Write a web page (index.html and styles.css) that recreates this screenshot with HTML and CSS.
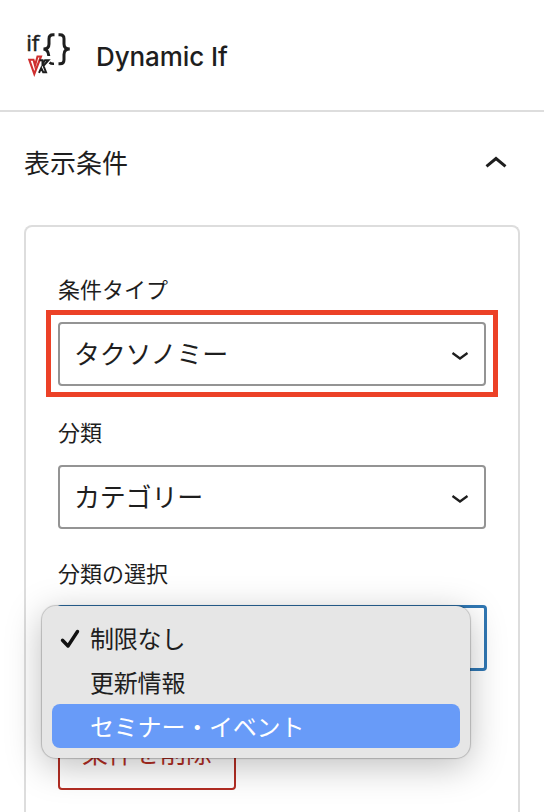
FILE: index.html
```html
<!DOCTYPE html>
<html lang="ja">
<head>
    <meta charset="UTF-8">
    <meta name="viewport" content="width=device-width, initial-scale=1.0">
    <title>Dynamic If</title>
    <link rel="stylesheet" href="styles.css">
</head>
<body>
    <header class="block-card">
        <svg class="block-icon" width="48" height="48" viewBox="0 0 48 48" fill="none">
            <text class="icon-if" x="2.2" y="19.8">if</text>
            <path d="M30.5 3.7H29Q25 3.7 25 7.7V13Q25 18 19.5 18Q24.3 18.5 24.8 25" stroke="#1e1e1e" stroke-width="3"/>
            <path d="M34.5 3.7H36Q40 3.7 40 7.7V13Q40 18 45.8 18Q40 18 40 23.5V28.8Q40 32.8 36 32.8H34.5" stroke="#1e1e1e" stroke-width="3"/>
            <path d="M25.5 31.5Q27 33 30 32.8" stroke="#1e1e1e" stroke-width="2.5"/>
            <path d="M5.3 28.8H9.5L11 34.5L13.5 25.5H17L10.3 43Z" stroke="#cf2e2e" stroke-width="2.1"/>
            <path d="M15.5 29.2H18.5V33L21 29.2H24.5L19.5 34.8L22 41.2H19.2L17.2 37L15 41.8" stroke="#1e1e1e" stroke-width="2"/>
        </svg>
        <h1>Dynamic If</h1>
    </header>

    <section class="panel">
        <div class="panel-title">
            <h2>表示条件</h2>
            <svg width="24" height="14" viewBox="0 0 24 14" fill="none">
                <path d="M2.5 10.3L12 2.5L21.5 10.3" stroke="#1e1e1e" stroke-width="3"/>
            </svg>
        </div>

        <div class="conditions">
            <div class="field">
                <div class="label">条件タイプ</div>
                <div class="select marked">
                    <span>タクソノミー</span>
                    <svg width="18" height="10" viewBox="0 0 18 10" fill="none">
                        <path d="M1.5 2L9 7.5L16.5 2" stroke="#1e1e1e" stroke-width="2.3"/>
                    </svg>
                </div>
            </div>
            <div class="field">
                <div class="label">分類</div>
                <div class="select">
                    <span>カテゴリー</span>
                    <svg width="18" height="10" viewBox="0 0 18 10" fill="none">
                        <path d="M1.5 2L9 7.5L16.5 2" stroke="#1e1e1e" stroke-width="2.3"/>
                    </svg>
                </div>
            </div>
            <div class="field last">
                <div class="label">分類の選択</div>
                <div class="select focused">
                    <ul class="menu">
                        <li>
                            <svg class="check" width="20" height="20" viewBox="0 0 20 20" fill="none">
                                <path d="M2.5 11.3L8 17L17.5 2.5" stroke="#111" stroke-width="3.4" stroke-linecap="round" stroke-linejoin="round"/>
                            </svg>
                            制限なし
                        </li>
                        <li>更新情報</li>
                        <li class="active">セミナー・イベント</li>
                    </ul>
                </div>
            </div>
            <button class="delete">条件を削除</button>
        </div>
    </section>
</body>
</html>
```

FILE: styles.css
```css
* {
    box-sizing: border-box;
}
body {
    margin: 0;
    background-color: #fff;
    color: #1e1e1e;
    font-family: Inter, "Noto Sans CJK JP", sans-serif;
}
h1, h2 {
    margin: 0;
}
.block-card {
    display: flex;
    align-items: center;
    gap: 24px;
    height: 112px;
    padding: 0 24px;
    border-bottom: 2px solid #ddd;
}
.block-icon {
    flex: none;
    overflow: visible;
}
.icon-if {
    font-family: "Open Sans", sans-serif;
    font-size: 22.5px;
    font-weight: 500;
    fill: #1e1e1e;
    stroke: #1e1e1e;
    stroke-width: 0.5px;
}
h1 {
    font-size: 26px;
    font-weight: 500;
    letter-spacing: -0.1px;
    padding-top: 3px;
}
.panel {
    padding: 0 24px;
}
.panel-title {
    display: flex;
    align-items: center;
    justify-content: space-between;
    height: 113px;
    padding: 0 12px 12px 0;
}
h2 {
    font-size: 26px;
    font-weight: 400;
    line-height: 38px;
    padding-top: 2px;
}
.conditions {
    height: 587px;
    padding: 46px 32px 0;
    border: 2px solid #ddd;
    border-bottom: none;
    border-radius: 8px 8px 0 0;
}
.label {
    height: 32px;
    margin-bottom: 17px;
    font-size: 22px;
    line-height: 34px;
}
.last .label {
    margin-bottom: 16px;
}
.select {
    position: relative;
    display: flex;
    align-items: center;
    justify-content: space-between;
    height: 64px;
    margin-bottom: 30px;
    padding: 0 15px 0 14px;
    border: 2px solid #949494;
    border-radius: 4px;
    font-size: 26px;
}
.field:nth-child(2) .select {
    margin-bottom: 28px;
}
.select span {
    padding-bottom: 4px;
    letter-spacing: -0.2px;
}
.select svg {
    margin-top: 3px;
}
/* red frame around the condition type */
.marked::before {
    content: "";
    position: absolute;
    inset: -14.5px -14px -13px -14.5px;
    border: 5px solid #ec4127;
}
.focused {
    margin: 0 -1px 47px;
    height: 66px;
    border: 3px solid #3077b3;
}
.menu {
    position: absolute;
    top: -2px;
    left: -18px;
    width: 428px;
    height: 152px;
    margin: 0;
    padding: 10px;
    list-style: none;
    background-color: #e6e6e6;
    border-radius: 14px;
    box-shadow: 0 0 1px 1px rgba(0, 0, 0, 0.2), 0 8px 36px rgba(0, 0, 0, 0.26);
    font-size: 24px;
}
.menu li {
    position: relative;
    height: 44px;
    padding-left: 38px;
    border-radius: 8px;
    line-height: 47px;
    letter-spacing: -0.2px;
}
.menu .active {
    background-color: #689bf8;
    color: #fff;
}
.menu .check {
    position: absolute;
    left: 8px;
    top: 10px;
}
.delete {
    height: 72px;
    padding: 0 22px 5px;
    background: none;
    border: 2px solid #b32d23;
    border-radius: 4px;
    color: #b32d23;
    font-family: inherit;
    font-size: 26px;
}
```
